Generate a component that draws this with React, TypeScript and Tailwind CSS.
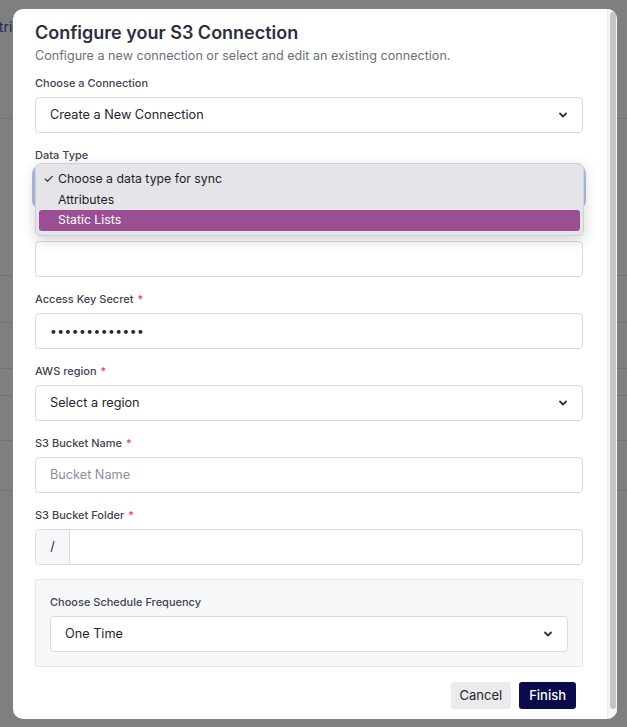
import React from 'react';

const font = { fontFamily: 'Inter, "Noto Sans", sans-serif' };

function Chevron() {
  return (
    <svg width="10" height="10" viewBox="0 0 10 10" fill="none" className="text-[#2f3342]">
      <path d="M2 3.5 L5 6.5 L8 3.5" stroke="currentColor" strokeWidth="1.8" strokeLinecap="round" strokeLinejoin="round" />
    </svg>
  );
}

function Label({ text, required }: { text: string; required?: boolean }) {
  return (
    <div className="h-4 text-[11px] leading-4 font-medium text-[#3f4352] mb-[6px]">
      {text}
      {required && <span className="text-[#e0434b] ml-1">*</span>}
    </div>
  );
}

function SelectBox({ value, focused }: { value: string; focused?: boolean }) {
  return (
    <div
      className={
        'h-9 flex items-center justify-between pl-[14px] pr-[14px] bg-white border rounded-[4px] text-[12.7px] text-[#23262f] ' +
        (focused ? 'border-[#8aa3e0] ring-[3px] ring-[#8fa6dc]/70' : 'border-[#d9dbe3]')
      }
    >
      <span>{value}</span>
      <Chevron />
    </div>
  );
}

function TextBox({ placeholder, children }: { placeholder?: string; children?: React.ReactNode }) {
  return (
    <div className="h-9 flex items-center px-[14px] bg-white border border-[#d9dbe3] rounded-[4px] text-[12.7px]">
      {children ?? <span className="text-[#8b90a0]">{placeholder}</span>}
    </div>
  );
}

function Field({ label, required, children }: { label: string; required?: boolean; children: React.ReactNode }) {
  return (
    <div className="mb-[14px]">
      <Label text={label} required={required} />
      {children}
    </div>
  );
}

function BackgroundPage() {
  const rows = [157, 47, 46, 27, 45, 50, 56];
  return (
    <div className="w-[627px] h-[727px] bg-white overflow-hidden" style={font}>
      <div className="h-[118px] pt-[16px] text-[14px] text-[#3f51b5] -ml-[22px]">Metrics</div>
      {rows.map((h, i) => (
        <div key={i} className="border-t border-[#e6e7eb] text-[14px] text-[#444] -ml-[62px] flex items-center" style={{ height: h }}>
          {i === 2 || i === 4 ? 'Delete D' : ''}
        </div>
      ))}
    </div>
  );
}

export default function App() {
  return (
    <div className="relative w-[627px] h-[727px] overflow-hidden">
      <BackgroundPage />
      <div className="absolute inset-0 bg-black/50 pl-[13px] pt-[9px]" style={font}>
        <div className="relative w-[604px] h-[710px] bg-white rounded-[10px] overflow-hidden flex">
          <div className="flex-1 pl-[22px] pr-[24px] pt-[12px]">
            <h2 className="text-[18px] leading-[24px] font-semibold text-[#2b2f40]">
              Configure your S3 Connection
            </h2>
            <p className="text-[12.6px] leading-5 text-[#6b6f7b] mt-[1px] mb-[9px]">
              Configure a new connection or select and edit an existing connection.
            </p>

            <Field label="Choose a Connection">
              <SelectBox value="Create a New Connection" />
            </Field>
            <Field label="Data Type">
              <SelectBox value="Choose a data type for sync" focused />
            </Field>
            <Field label="Access Key ID" required>
              <TextBox placeholder="" />
            </Field>
            <Field label="Access Key Secret" required>
              <TextBox>
                <span className="text-[#23262f] text-[12px] tracking-[0.5px]">•••••••••••••</span>
              </TextBox>
            </Field>
            <Field label="AWS region" required>
              <SelectBox value="Select a region" />
            </Field>
            <Field label="S3 Bucket Name" required>
              <TextBox placeholder="Bucket Name" />
            </Field>
            <Field label="S3 Bucket Folder" required>
              <div className="h-9 flex bg-white border border-[#d9dbe3] rounded-[4px] text-[12.7px] overflow-hidden">
                <div className="w-[34px] flex items-center justify-center bg-[#f6f7f9] border-r border-[#d9dbe3] text-[#23262f]">
                  /
                </div>
                <div className="flex-1" />
              </div>
            </Field>

            <div className="border border-[#e4e5ea] bg-[#f7f8fa] rounded-[2px] p-[14px]">
              <Label text="Choose Schedule Frequency" />
              <SelectBox value="One Time" />
            </div>

            <div className="flex justify-end gap-2 mt-[15px] pr-[7px]">
              <button className="h-[27px] px-[9px] rounded-[3px] bg-[#ebebeb] text-[13px] text-[#23262f]">Cancel</button>
              <button className="h-[27px] px-[10px] rounded-[3px] bg-[#0b0a4a] text-[13px] font-medium text-white">Finish</button>
            </div>
          </div>

          {/* scrollbar */}
          <div className="w-[10px] bg-[#f5f5f5] border-l border-[#ececec] pt-[3px] pb-[10px] flex justify-center">
            <div className="w-[6px] h-full rounded-full bg-[#c4c4c4]" />
          </div>

          {/* native select popup */}
          <div className="absolute left-[22px] top-[154px] w-[549px] h-[73px] bg-[#e4e4e9] rounded-[6px] border border-[#cfd0d6] shadow-[0_4px_14px_rgba(0,0,0,0.18)] px-[3px] pt-[5px] text-[12.3px] text-[#1d1f26]">
            <div className="h-[21px] flex items-center pl-[4px]">
              <span className="w-[15px]">✓</span>
              <span>Choose a data type for sync</span>
            </div>
            <div className="h-[20px] flex items-center pl-[19px]">Attributes</div>
            <div className="h-[21px] flex items-center pl-[19px] bg-[#9a4f95] text-white rounded-[3px]">Static Lists</div>
          </div>
        </div>
      </div>
    </div>
  );
}
